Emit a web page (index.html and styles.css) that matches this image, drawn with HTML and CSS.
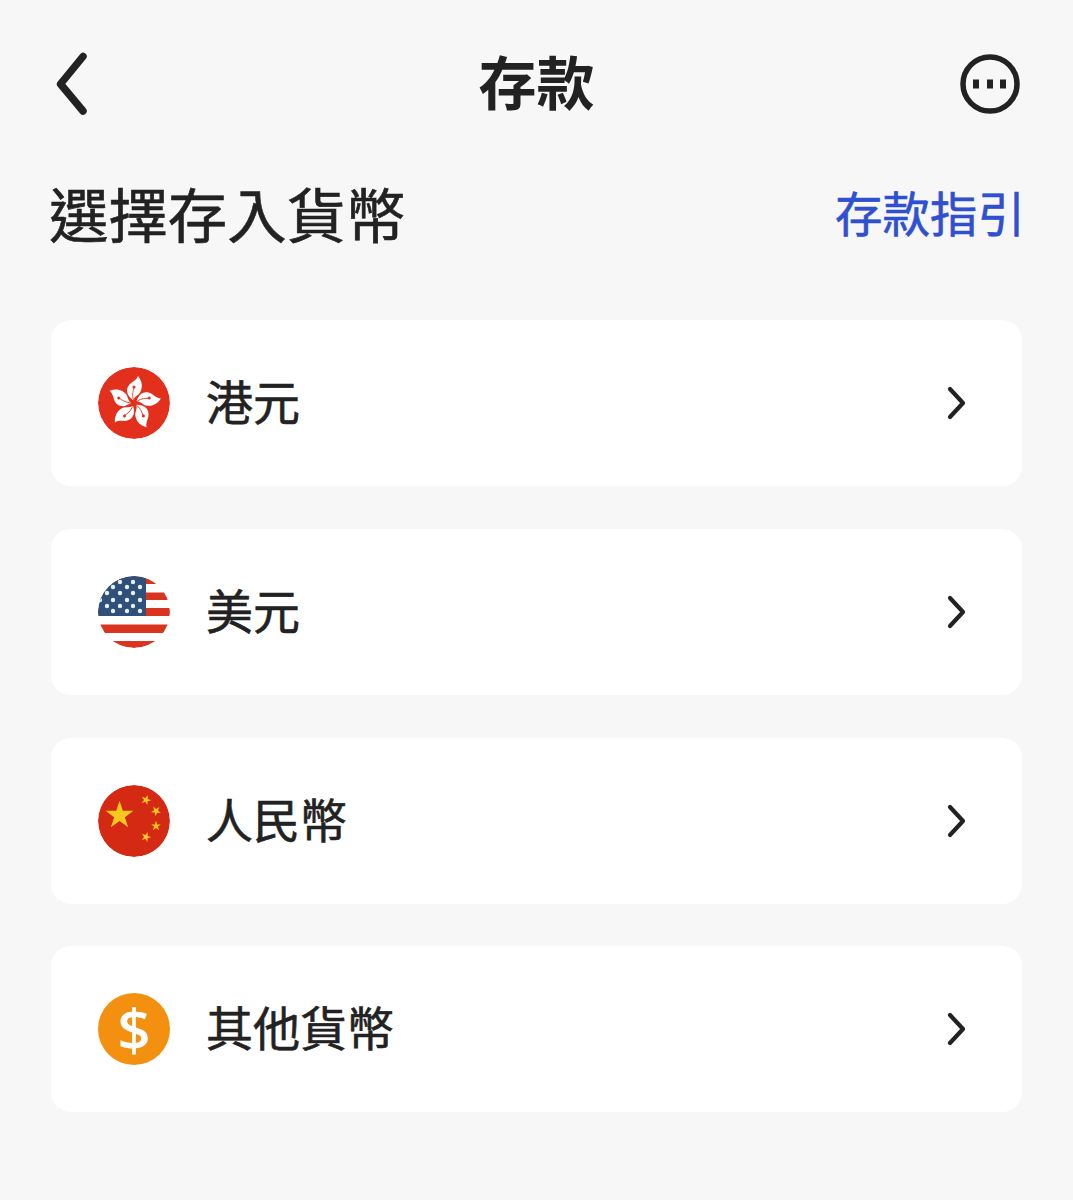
FILE: index.html
```html
<!DOCTYPE html>
<html lang="zh-Hant">
<head>
    <meta charset="UTF-8">
    <meta name="viewport" content="width=device-width, initial-scale=1.0">
    <title>存款</title>
    <link rel="stylesheet" href="styles.css">
</head>
<body>
    <div class="page">
        <header class="top-bar">
            <svg class="back-icon" viewBox="0 0 40 66" aria-hidden="true">
                <path d="M32 5.500 L9.500 33 L32 60" />
            </svg>
            <h1>存款</h1>
            <svg class="more-icon" viewBox="0 0 60 60" aria-hidden="true">
                <circle class="more-ring" cx="30" cy="30" r="27" />
                <rect x="13" y="25.500" width="6" height="9" />
                <rect x="27" y="25.500" width="6" height="9" />
                <rect x="40" y="25.500" width="6" height="9" />
            </svg>
        </header>

        <div class="section-head">
            <h2>選擇存入貨幣</h2>
            <a class="guide-link" href="#">存款指引</a>
        </div>

        <div class="currency-list">
            <a class="currency-card" href="#">
                <svg class="flag" viewBox="0 0 72 72" aria-hidden="true">
                    <circle cx="36" cy="36" r="36" fill="#e2301c" />
                    <g transform="translate(36 36)">
                        <g id="hk-petal">
                            <path fill="#fff" d="M-1 -3 C-8 -8 -9 -15 -3 -20 C0 -22 3 -24 4 -27 C9 -21 9 -14 5 -9 C2 -7 0 -5 -1 -3Z" />
                            <path fill="none" stroke="#e2301c" stroke-width="0.800" d="M-1 -4 C-2 -9 -1 -12 0 -15" />
                            <circle cx="0" cy="-16" r="1.500" fill="#e2301c" />
                        </g>
                        <use href="#hk-petal" transform="rotate(72)" />
                        <use href="#hk-petal" transform="rotate(144)" />
                        <use href="#hk-petal" transform="rotate(216)" />
                        <use href="#hk-petal" transform="rotate(288)" />
                    </g>
                </svg>
                <span class="currency-name">港元</span>
                <svg class="arrow" viewBox="0 0 24 36" aria-hidden="true"><path d="M5 4 L18 18 L5 32" /></svg>
            </a>

            <a class="currency-card" href="#">
                <svg class="flag" viewBox="0 0 72 72" aria-hidden="true">
                    <defs>
                        <clipPath id="us-clip"><circle cx="36" cy="36" r="36" /></clipPath>
                    </defs>
                    <g clip-path="url(#us-clip)">
                        <rect width="72" height="72" fill="#fff" />
                        <rect y="0" width="72" height="8" fill="#d9341f" />
                        <rect y="16.500" width="72" height="7.500" fill="#d9341f" />
                        <rect y="32" width="72" height="8" fill="#d9341f" />
                        <rect y="48.500" width="72" height="8.500" fill="#d9341f" />
                        <rect y="65" width="72" height="7" fill="#d9341f" />
                        <rect width="48" height="40" fill="#2f5078" />
                        <g fill="#e8eef5">
                            <circle cx="22" cy="6" r="2.200" /><circle cx="35" cy="6" r="2.200" />
                            <circle cx="15" cy="11" r="2.200" /><circle cx="29" cy="11" r="2.200" /><circle cx="42" cy="11" r="2.200" />
                            <circle cx="9" cy="17" r="2.200" /><circle cx="22" cy="17" r="2.200" /><circle cx="35" cy="17" r="2.200" />
                            <circle cx="2" cy="24" r="2.200" /><circle cx="15" cy="24" r="2.200" /><circle cx="29" cy="24" r="2.200" /><circle cx="42" cy="24" r="2.200" />
                            <circle cx="9" cy="30" r="2.200" /><circle cx="22" cy="30" r="2.200" /><circle cx="35" cy="30" r="2.200" />
                            <circle cx="15" cy="35" r="2.200" /><circle cx="29" cy="35" r="2.200" /><circle cx="42" cy="35" r="2.200" />
                        </g>
                    </g>
                </svg>
                <span class="currency-name">美元</span>
                <svg class="arrow" viewBox="0 0 24 36" aria-hidden="true"><path d="M5 4 L18 18 L5 32" /></svg>
            </a>

            <a class="currency-card" href="#">
                <svg class="flag" viewBox="0 0 72 72" aria-hidden="true">
                    <defs>
                        <polygon id="cn-star" points="0,-1 0.225,-0.309 0.951,-0.309 0.363,0.118 0.588,0.809 0,0.382 -0.588,0.809 -0.363,0.118 -0.951,-0.309 -0.225,-0.309" />
                    </defs>
                    <circle cx="36" cy="36" r="36" fill="#d42a14" />
                    <g fill="#f9c81e">
                        <use href="#cn-star" transform="translate(21.500 30.400) scale(14.700)" />
                        <use href="#cn-star" transform="translate(48 15) rotate(20) scale(5.200)" />
                        <use href="#cn-star" transform="translate(58 26) rotate(40) scale(5.200)" />
                        <use href="#cn-star" transform="translate(58 41) scale(5.200)" />
                        <use href="#cn-star" transform="translate(48 52) rotate(20) scale(5.200)" />
                    </g>
                </svg>
                <span class="currency-name">人民幣</span>
                <svg class="arrow" viewBox="0 0 24 36" aria-hidden="true"><path d="M5 4 L18 18 L5 32" /></svg>
            </a>

            <a class="currency-card" href="#">
                <span class="coin">$</span>
                <span class="currency-name">其他貨幣</span>
                <svg class="arrow" viewBox="0 0 24 36" aria-hidden="true"><path d="M5 4 L18 18 L5 32" /></svg>
            </a>
        </div>
    </div>
</body>
</html>
```

FILE: styles.css
```css
* {
    box-sizing: border-box;
}
body {
    margin: 0;
    background-color: #f7f7f7;
    color: #222222;
    font-family: "Noto Sans CJK TC", "Noto Sans", sans-serif;
}
.page {
    height: 1200px;
    padding: 51px 51px 0;
    overflow: hidden;
}
.top-bar {
    display: grid;
    grid-template-columns: 1fr auto 1fr;
    align-items: center;
    height: 66px;
}
.top-bar h1 {
    align-self: start;
    margin: 0;
    font-size: 58px;
    line-height: 58px;
    font-weight: 700;
}
.back-icon {
    width: 40px;
    height: 66px;
}
.back-icon path {
    fill: none;
    stroke: #222222;
    stroke-width: 7.500;
    stroke-linecap: round;
    stroke-linejoin: round;
}
.more-icon {
    width: 60px;
    height: 60px;
    justify-self: end;
    margin-right: 2px;
    fill: #222222;
}
.more-ring {
    fill: none;
    stroke: #222222;
    stroke-width: 5.500;
}
.section-head {
    display: flex;
    justify-content: space-between;
    align-items: flex-start;
    margin-top: 64px;
    height: 70px;
}
.section-head h2 {
    margin: 0 0 0 -2px;
    font-size: 59.400px;
    line-height: 62px;
    font-weight: 400;
    -webkit-text-stroke: 0.6px #222222;
}
.guide-link {
    margin-right: -3px;
    color: #2f50cf;
    font-size: 47.500px;
    font-weight: 400;
    line-height: 62px;
    text-decoration: none;
    -webkit-text-stroke: 0.6px #2f50cf;
}
.currency-list {
    display: flex;
    flex-direction: column;
    gap: 42.600px;
    margin-top: 69.400px;
}
.currency-card {
    display: flex;
    align-items: center;
    height: 166px;
    padding: 0 53px 0 47px;
    background: #ffffff;
    border-radius: 20px;
    color: #222222;
    text-decoration: none;
}
.flag,
.coin {
    flex: none;
    width: 72px;
    height: 72px;
    border-radius: 50%;
}
.coin {
    display: flex;
    align-items: center;
    justify-content: center;
    background: #f4900f;
    color: #ffffff;
    font-family: "Open Sans", sans-serif;
    font-size: 58px;
    font-weight: 600;
    line-height: 72px;
}
.currency-name {
    flex: 1;
    margin: 0 0 6px 36px;
    font-size: 47px;
    font-weight: 400;
    line-height: 60px;
    -webkit-text-stroke: 0.6px #222222;
}
.arrow {
    width: 24px;
    height: 36px;
}
.arrow path {
    fill: none;
    stroke: #222222;
    stroke-width: 4.200;
    stroke-linecap: round;
    stroke-linejoin: round;
}
```
